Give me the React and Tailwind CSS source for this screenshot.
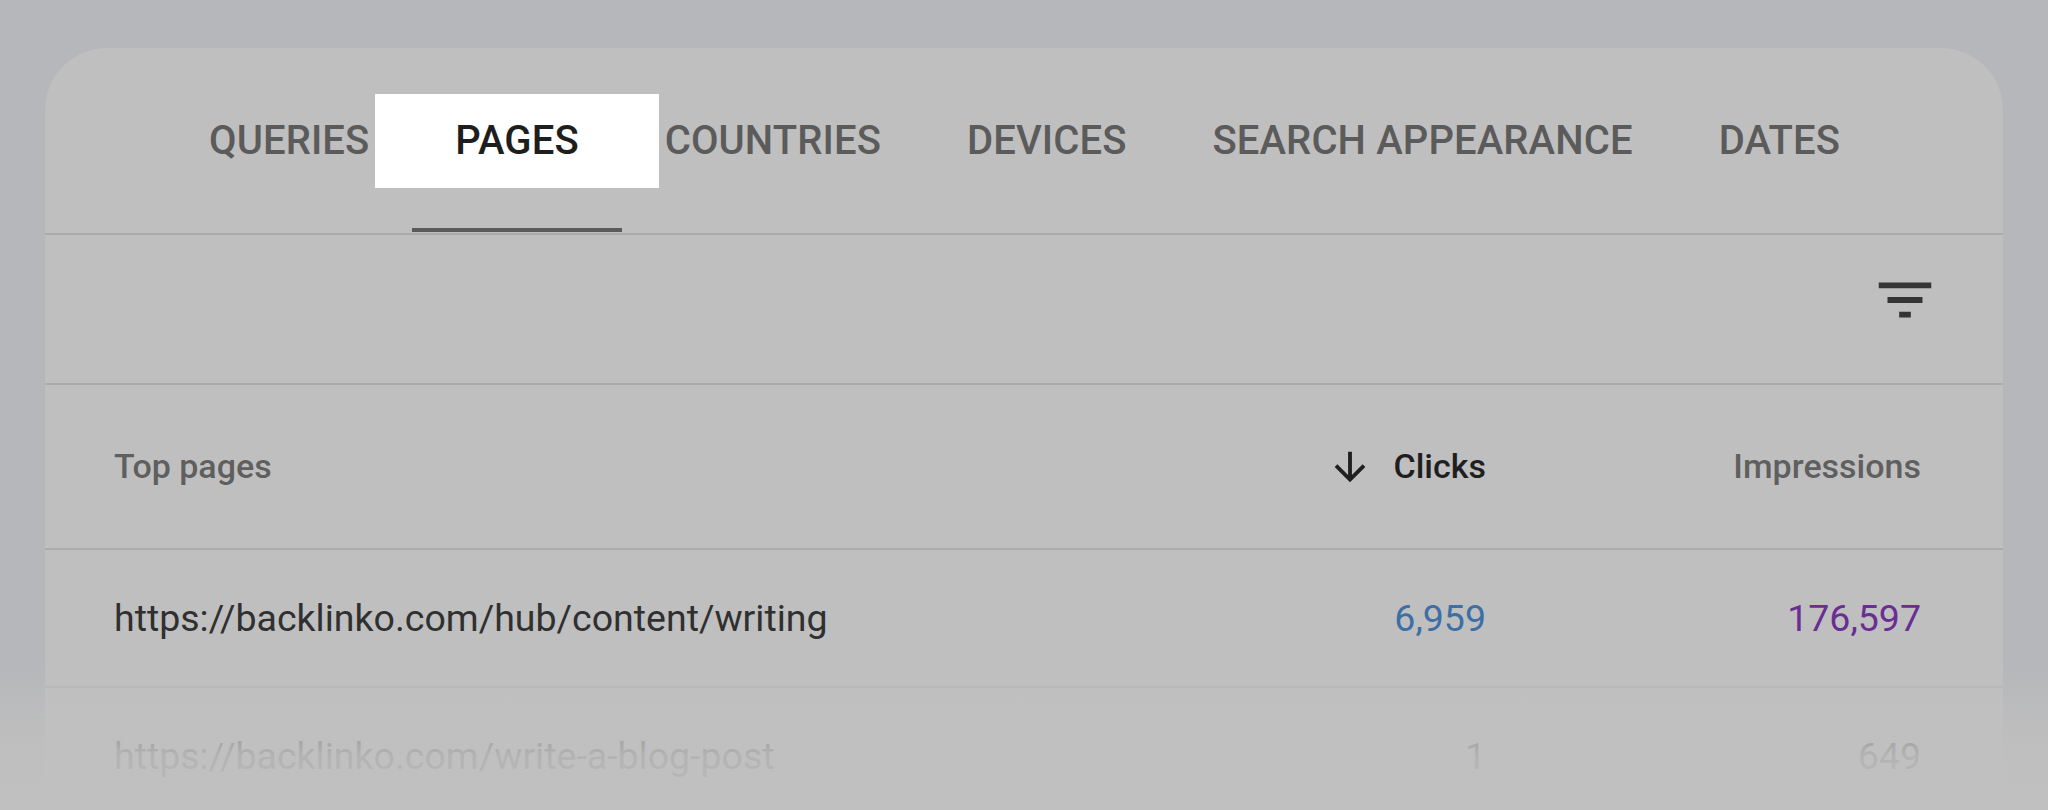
import React from "react";

const tabs = ["Queries", "Pages", "Countries", "Devices", "Search appearance", "Dates"];

function FilterIcon() {
  return (
    <svg width="70" height="70" viewBox="0 0 24 24" fill="#353535">
      <path d="M10 18h4v-2h-4v2zM3 6v2h18V6H3zm3 7h12v-2H6v2z" />
    </svg>
  );
}

function ArrowDown() {
  return (
    <svg width="46" height="46" viewBox="0 0 24 24" fill="#1f1f1f">
      <path d="M20 12l-1.41-1.41L13 16.17V4h-2v12.17l-5.58-5.59L4 12l8 8 8-8z" />
    </svg>
  );
}

export default function App() {
  return (
    <div
      className="relative w-[2048px] h-[810px] overflow-hidden bg-[#b6b7ba] pt-[48px] pl-[45px]"
      style={{ fontFamily: "Roboto, 'Liberation Sans', sans-serif" }}
    >
      <div className="w-[1958px] rounded-t-[62px] bg-[#bfbfbf]">
        {/* Tabs */}
        <div className="flex h-[185px] pl-[121px]">
          {tabs.map((t) => {
            const active = t === "Pages";
            return (
              <div key={t} className="relative flex items-center px-[43px]">
                {active && (
                  <div className="absolute left-[-37px] right-[-37px] top-[46px] h-[94px] bg-white" />
                )}
                <span
                  className={
                    "relative text-[40px] font-medium uppercase leading-none tracking-[0.1px] " +
                    (active ? "text-[#1e1e1e]" : "text-[#5b5b5b]")
                  }
                >
                  {t}
                </span>
                {active && (
                  <div className="absolute left-0 right-0 bottom-[1px] h-[4px] bg-[#5a5a5a]" />
                )}
              </div>
            );
          })}
        </div>
        <div className="h-[2px] bg-[#ababab]" />

        {/* Toolbar */}
        <div className="flex h-[148px] justify-end pr-[63px] pt-[30px]">
          <FilterIcon />
        </div>
        <div className="h-[2px] bg-[#ababab]" />

        {/* Header */}
        <div className="flex h-[163px] items-center pl-[69px] pr-[82px] text-[34px] font-medium">
          <div className="flex-1 text-[#5f5f5f]">Top pages</div>
          <div className="flex w-[300px] items-center justify-end gap-[20px] text-[#1f1f1f]">
            <ArrowDown />
            <span>Clicks</span>
          </div>
          <div className="w-[435px] text-right text-[#5f5f5f]">Impressions</div>
        </div>
        <div className="h-[2px] bg-[#ababab]" />

        {/* Row 1 */}
        <div className="flex h-[136px] items-center pl-[69px] pr-[82px] text-[37.5px]">
          <div className="flex-1 text-[#303030]">https://backlinko.com/hub/content/writing</div>
          <div className="w-[300px] text-right text-[#3e6ea6]">6,959</div>
          <div className="w-[435px] text-right text-[#6a2e93]">176,597</div>
        </div>
        <div className="h-[2px] bg-[#b5b5b8]" />

        {/* Row 2 */}
        <div className="flex h-[136px] items-center pl-[69px] pr-[82px] text-[37.5px]">
          <div className="flex-1 text-[#3c3c3c]">https://backlinko.com/write-a-blog-post</div>
          <div className="w-[300px] text-right text-[#3c3c3c]">1</div>
          <div className="w-[435px] text-right text-[#3c3c3c]">649</div>
        </div>
      </div>

      {/* Bottom fade */}
      <div className="pointer-events-none absolute left-0 right-0 top-[665px] bottom-0 bg-[linear-gradient(to_bottom,rgba(192,192,192,0)_0px,rgba(192,192,192,0.6)_50px,rgba(192,192,192,0.9)_90px,rgba(192,192,192,0.97)_145px)]" />
    </div>
  );
}
